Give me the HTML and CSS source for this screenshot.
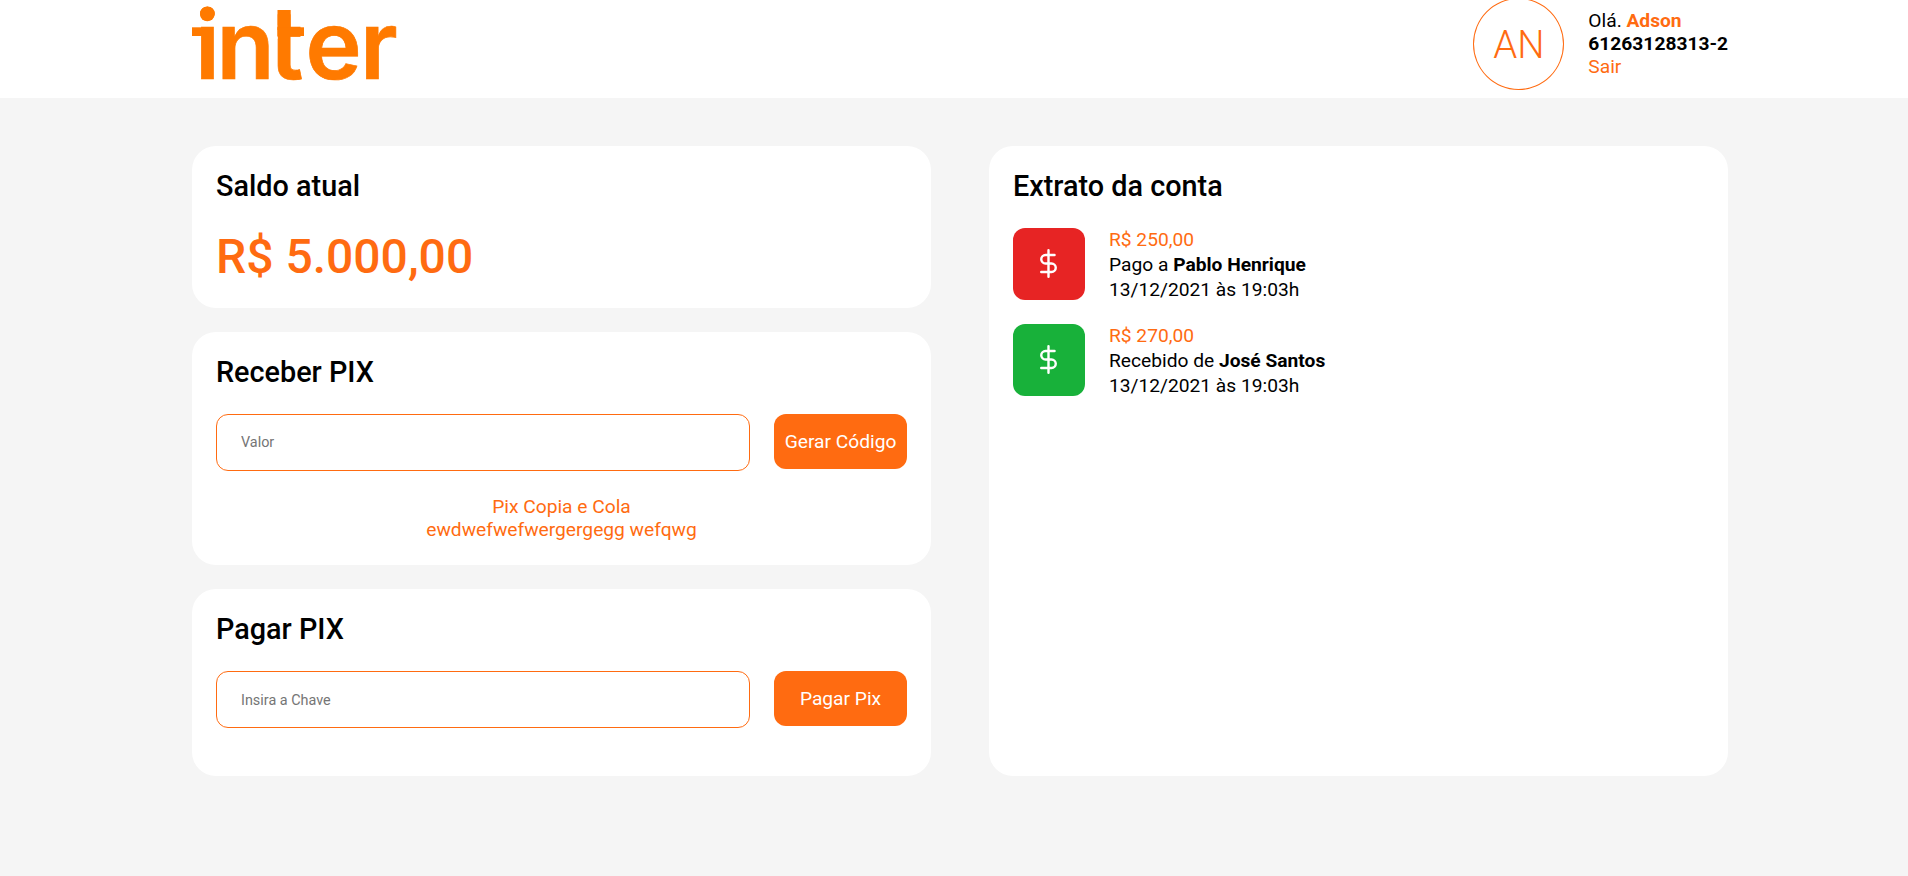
FILE: index.html
```html
<!DOCTYPE html>
<html lang="pt-br">
<head>
<meta charset="utf-8">
<title>Inter</title>
<link rel="stylesheet" href="styles.css">
</head>
<body>
<header class="header">
  <svg class="logo" width="208" height="98" viewBox="0 0 208 98" role="img" aria-label="inter">
    <text class="logo-text" y="79" x="3 24.500 77.800 113.500 168">inter</text>
    <rect class="logo-gap" x="77.500" y="25" width="8" height="14"/>
    <rect x="0" y="27.300" width="14" height="8.700"/>
    <rect x="85.500" y="10" width="13.200" height="20"/>
    <rect x="85.500" y="27.300" width="26.500" height="8.700"/>
    <circle cx="15.300" cy="14" r="7.300"/>
  </svg>
  <div class="user">
    <div class="avatar">AN</div>
    <div class="user-data">
      <p>Olá. <b class="accent">Adson</b></p>
      <p><b>61263128313-2</b></p>
      <a class="accent">Sair</a>
    </div>
  </div>
</header>
<main class="content">
  <div class="column">
    <section class="card balance">
      <h2>Saldo atual</h2>
      <p class="amount">R$ 5.000,00</p>
    </section>
    <section class="card receive">
      <h2>Receber PIX</h2>
      <div class="form">
        <input class="field" placeholder="Valor">
        <button class="button">Gerar Código</button>
      </div>
      <div class="pix-code">
        <p>Pix Copia e Cola</p>
        <p>ewdwefwefwergergegg wefqwg</p>
      </div>
    </section>
    <section class="card pay">
      <h2>Pagar PIX</h2>
      <div class="form">
        <input class="field key" placeholder="Insira a Chave">
        <button class="button">Pagar Pix</button>
      </div>
    </section>
  </div>
  <section class="card statement">
    <h2>Extrato da conta</h2>
    <div class="entry">
      <div class="entry-icon paid">
        <svg width="29" height="29" viewBox="0 0 24 24"><path d="M12 1v22M17 5H9.500a3.500 3.500 0 0 0 0 7h5a3.500 3.500 0 0 1 0 7H6"/></svg>
      </div>
      <div class="entry-text">
        <p class="accent">R$ 250,00</p>
        <p>Pago a <b>Pablo Henrique</b></p>
        <p>13/12/2021 às 19:03h</p>
      </div>
    </div>
    <div class="entry">
      <div class="entry-icon received">
        <svg width="29" height="29" viewBox="0 0 24 24"><path d="M12 1v22M17 5H9.500a3.500 3.500 0 0 0 0 7h5a3.500 3.500 0 0 1 0 7H6"/></svg>
      </div>
      <div class="entry-text">
        <p class="accent">R$ 270,00</p>
        <p>Recebido de <b>José Santos</b></p>
        <p>13/12/2021 às 19:03h</p>
      </div>
    </div>
  </section>
</main>
</body>
</html>
```
FILE: styles.css
```css
* { box-sizing: border-box; margin: 0; padding: 0; }
body {
  background: #f5f5f5;
  color: #000;
  font-family: Roboto, sans-serif;
  font-size: 19.2px;
  overflow: hidden;
}
.accent { color: #ff6b11; }
.header {
  height: 98px;
  padding: 0 180px 0 192px;
  background: #fff;
  display: flex;
  justify-content: space-between;
}
.logo { fill: #ff7a00; overflow: visible; }
.logo-text { font: 600 95px Inter, sans-serif; stroke: #ff7a00; stroke-width: 0.7px; }
.logo-gap { fill: #fff; }
.user { height: 88px; display: flex; align-items: center; gap: 24px; }
.avatar {
  width: 91px;
  height: 92px;
  border: 1px solid #ff6b11;
  border-radius: 50%;
  color: #ff6b11;
  font-size: 38.4px;
  font-weight: 300;
  display: flex;
  align-items: center;
  justify-content: center;
}
.user-data { line-height: 23px; padding-bottom: 2px; }
.user-data b { font-weight: 700; }
.content {
  padding: 48px 180px 0 192px;
  display: grid;
  grid-template-columns: 739px 739px;
  gap: 58px;
}
.column { display: flex; flex-direction: column; gap: 24px; }
.card { background: #fff; border-radius: 24px; padding: 24px; }
.balance { height: 162px; }
.receive { height: 233px; }
.pay { height: 187px; }
h2 { font-size: 28.8px; font-weight: 500; line-height: 32px; margin-bottom: 26px; }
.amount { color: #ff6b11; font-size: 48px; font-weight: 500; line-height: 58px; }
.form { display: flex; gap: 24px; align-items: flex-start; }
.field {
  flex: 1;
  height: 57px;
  border: 1px solid #ff6b11;
  border-radius: 12px;
  padding: 0 24px;
  font: 14.4px Roboto, sans-serif;
}
.key { padding-top: 2px; }
.field::placeholder { color: #757575; }
.button {
  width: 133px;
  height: 55px;
  border: 0;
  border-radius: 12px;
  background: #ff6b11;
  color: #fff;
  font: 19.2px Roboto, sans-serif;
}
.pix-code { margin-top: 24px; color: #ff6b11; line-height: 23px; text-align: center; }
.entry { display: flex; gap: 24px; margin-bottom: 24px; }
.entry-icon {
  width: 72px;
  height: 72px;
  padding: 0 1px 1px 0;
  border-radius: 12px;
  display: flex;
  align-items: center;
  justify-content: center;
}
.entry-icon svg { fill: none; stroke: #fff; stroke-width: 2; stroke-linecap: round; stroke-linejoin: round; }
.paid { background: #e72424; }
.received { background: #18b13a; }
.entry-text { line-height: 25px; height: 72px; margin-top: -1px; margin-bottom: 1px; }
.entry-text b { font-weight: 700; }
```
